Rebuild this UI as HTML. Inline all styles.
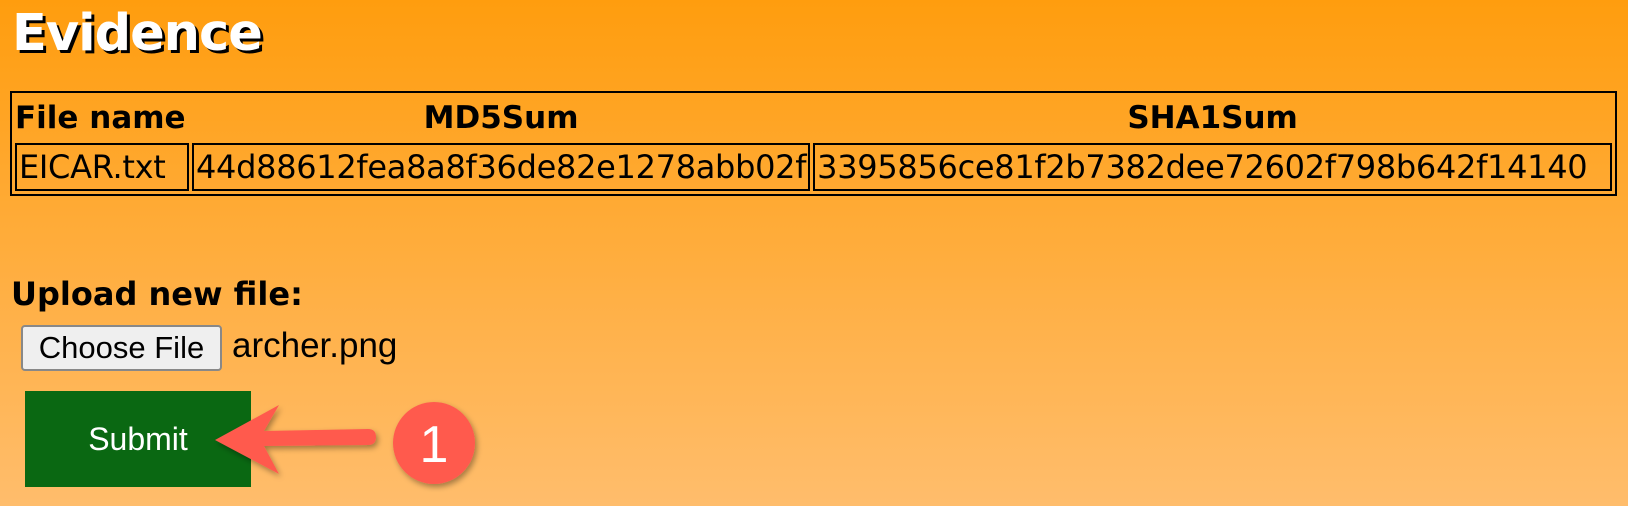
<!DOCTYPE html>
<html><head><style>
body{margin:0;width:1628px;height:506px;overflow:hidden;background:linear-gradient(#ff9d0e,#ffbd6c);font-family:"DejaVu Sans",sans-serif;position:relative}
h1{position:absolute;left:12px;top:-1px;margin:0;font-size:51px;font-weight:bold;color:#fff;text-shadow:3px 3px 0 #000;letter-spacing:-1px;line-height:70px}
table{position:absolute;left:10px;top:91px;width:1607px;height:104px;border:2px solid #000;border-spacing:3px;font-size:31px;box-sizing:border-box}
th{font-weight:bold;text-align:center;padding:0;height:44px}
td{border:2px solid #000;padding:0 2px;height:44px;white-space:nowrap;font-size:32px;letter-spacing:-0.3px}
.lbl{position:absolute;left:11px;top:275px;font-size:32px;font-weight:bold}
.cf{position:absolute;left:21px;top:325px;width:197px;height:42px;border:2px solid #888;border-radius:4px;background:#efefef;font-family:"Liberation Sans",sans-serif;font-size:31px;line-height:42px;text-align:center}
.fn{position:absolute;left:232px;top:326px;font-size:35px;font-family:"Liberation Sans",sans-serif}
.sub{position:absolute;left:25px;top:391px;width:226px;height:96px;background:#0a6812;color:#fff;font-family:"Liberation Sans",sans-serif;font-size:32px;line-height:96px;text-align:center}
</style></head><body>
<h1>Evidence</h1>
<table>
<tr><th style="text-align:left;width:174px">File name</th><th style="width:616px">MD5Sum</th><th>SHA1Sum</th></tr>
<tr><td>EICAR.txt</td><td>44d88612fea8a8f36de82e1278abb02f</td><td>3395856ce81f2b7382dee72602f798b642f14140</td></tr>
</table>
<div class="lbl">Upload new file:</div>
<div class="cf">Choose File</div>
<div class="fn">archer.png</div>
<div class="sub">Submit</div>
<svg style="position:absolute;left:0;top:0" width="1628" height="506">
<defs><filter id="s"><feDropShadow dx="2" dy="3" stdDeviation="3" flood-opacity="0.35"/></filter></defs>
<g filter="url(#s)" fill="#ff5a4e">
<path d="M215 440 L279 405 L264 431 L368 429 Q376 429 376 437 Q376 445 368 445 L264 446 L279 474 Z"/>
<circle cx="434" cy="443" r="41"/>
</g>
<text x="434" y="462" text-anchor="middle" font-family="Liberation Sans" font-size="52" fill="#fff">1</text>
</svg>
</body></html>
